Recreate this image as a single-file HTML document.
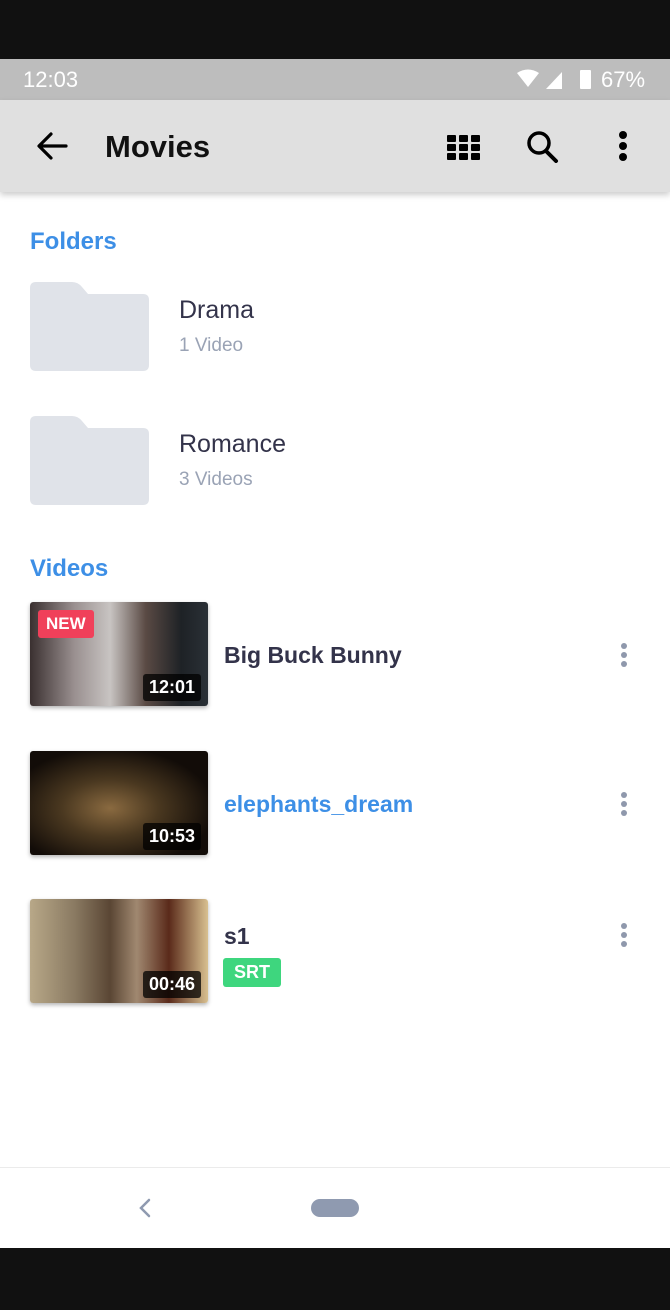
<!DOCTYPE html>
<html><head><meta charset="utf-8"><style>
*{margin:0;padding:0;box-sizing:border-box}
body{width:670px;height:1310px;position:relative;background:#fff;font-family:"Liberation Sans",sans-serif;overflow:hidden}
.a{position:absolute}
.t{color:#33334a;font-size:23px;font-weight:bold}
.th{position:absolute;left:30px;width:178px;height:104px;border-radius:3px;overflow:hidden;box-shadow:0 2px 4px rgba(0,0,0,.3)}
.dur{position:absolute;right:7px;bottom:5px;background:rgba(0,0,0,.75);color:#fff;font-size:18px;font-weight:bold;padding:3px 6px;border-radius:3px}
.dots{position:absolute;left:621px;width:6px}
.dots i{display:block;width:6px;height:6px;border-radius:3px;background:#8f98ac;margin-bottom:3px}
.fold{position:absolute;left:30px;width:119px;height:89px}
</style></head><body>
<div class="a" style="left:0;top:0;width:670px;height:59px;background:#111"></div>
<div class="a" style="left:0;top:59px;width:670px;height:41px;background:#bdbdbd"></div>
<div class="a" style="left:23px;top:67px;color:#fff;font-size:22px">12:03</div>
<svg class="a" style="left:516px;top:69px" width="52" height="22"><path d="M1 4 Q12 -3 23 4 L12 18Z" fill="#fff"/><path d="M30 20 L46 3 L46 20Z" fill="#fff"/></svg>
<div class="a" style="left:580px;top:70px;width:11px;height:19px;background:#fff;border-radius:1px"></div>
<div class="a" style="left:601px;top:67px;color:#fff;font-size:22px">67%</div>
<div class="a" style="left:0;top:100px;width:670px;height:92px;background:#e0e0e0;box-shadow:0 3px 6px rgba(0,0,0,.2)"></div>
<svg class="a" style="left:36px;top:132px" width="32" height="28"><path d="M30 14H4M15 2L3 14L15 26" stroke="#000" stroke-width="3.2" fill="none" stroke-linecap="round" stroke-linejoin="round"/></svg>
<div class="a" style="left:105px;top:129px;font-size:31px;font-weight:bold;color:#111">Movies</div>
<svg class="a" style="left:447px;top:135px" width="33" height="25" fill="#000"><rect x="0" y="0" width="9" height="7" rx="1"/><rect x="12" y="0" width="9" height="7" rx="1"/><rect x="24" y="0" width="9" height="7" rx="1"/><rect x="0" y="9" width="9" height="7" rx="1"/><rect x="12" y="9" width="9" height="7" rx="1"/><rect x="24" y="9" width="9" height="7" rx="1"/><rect x="0" y="18" width="9" height="7" rx="1"/><rect x="12" y="18" width="9" height="7" rx="1"/><rect x="24" y="18" width="9" height="7" rx="1"/></svg>
<svg class="a" style="left:525px;top:129px" width="36" height="34"><circle cx="14" cy="14" r="10" stroke="#000" stroke-width="3.5" fill="none"/><path d="M21 22L31 32" stroke="#000" stroke-width="4" stroke-linecap="round"/></svg>
<svg class="a" style="left:617px;top:131px" width="12" height="32" fill="#000"><circle cx="6" cy="4" r="4"/><circle cx="6" cy="15" r="4"/><circle cx="6" cy="26" r="4"/></svg>

<div class="a" style="left:30px;top:228px;font-size:24px;font-weight:bold;color:#3d8fe6">Folders</div>
<svg class="fold" style="top:282px" viewBox="0 0 119 89"><path d="M6 0H42Q48 0 52 5L58 12H113Q119 12 119 18V83Q119 89 113 89H6Q0 89 0 83V6Q0 0 6 0Z" fill="#e0e3e9"/></svg>
<div class="a t" style="left:179px;top:296px;font-weight:normal;font-size:25px;color:#33334a">Drama</div>
<div class="a" style="left:179px;top:335px;font-size:19px;color:#9aa3b5">1 Video</div>
<svg class="fold" style="top:416px" viewBox="0 0 119 89"><path d="M6 0H42Q48 0 52 5L58 12H113Q119 12 119 18V83Q119 89 113 89H6Q0 89 0 83V6Q0 0 6 0Z" fill="#e0e3e9"/></svg>
<div class="a t" style="left:179px;top:430px;font-weight:normal;font-size:25px">Romance</div>
<div class="a" style="left:179px;top:469px;font-size:19px;color:#9aa3b5">3 Videos</div>

<div class="a" style="left:30px;top:555px;font-size:24px;font-weight:bold;color:#3d8fe6">Videos</div>

<div class="th" style="top:602px;background:linear-gradient(90deg,#3a3030 0%,#9a9090 25%,#c8c4c2 45%,#5a4a44 65%,#1e2226 85%,#2a3036 100%)">
<div class="a" style="left:8px;top:8px;background:#f0405a;color:#fff;font-size:17px;font-weight:bold;padding:4px 8px;border-radius:3px">NEW</div>
<div class="dur">12:01</div></div>
<div class="a t" style="left:224px;top:642px">Big Buck Bunny</div>
<div class="dots" style="top:643px"><i></i><i></i><i></i></div>

<div class="th" style="top:751px;background:radial-gradient(ellipse at 45% 55%,#8a6a40 0%,#4a3820 35%,#120c08 75%)">
<div class="dur">10:53</div></div>
<div class="a t" style="left:224px;top:791px;color:#3d8fe6">elephants_dream</div>
<div class="dots" style="top:792px"><i></i><i></i><i></i></div>

<div class="th" style="top:899px;background:linear-gradient(90deg,#b8a888 0%,#8a7a62 25%,#5a4634 45%,#a08870 60%,#5a2a1a 78%,#d8c090 100%)">
<div class="dur">00:46</div></div>
<div class="a t" style="left:224px;top:923px">s1</div>
<div class="a" style="left:223px;top:958px;background:#3ed67e;color:#fff;font-size:18px;font-weight:bold;padding:4px 11px;border-radius:3px">SRT</div>
<div class="dots" style="top:923px"><i></i><i></i><i></i></div>

<div class="a" style="left:0;top:1167px;width:670px;height:1px;background:#ebebeb"></div>
<svg class="a" style="left:138px;top:1198px" width="14" height="20"><path d="M11 2L3 10L11 18" stroke="#8f9ab0" stroke-width="2.5" fill="none" stroke-linecap="round"/></svg>
<div class="a" style="left:311px;top:1199px;width:48px;height:18px;border-radius:9px;background:#8f9ab0"></div>
<div class="a" style="left:0;top:1248px;width:670px;height:62px;background:#111"></div>
</body></html>
